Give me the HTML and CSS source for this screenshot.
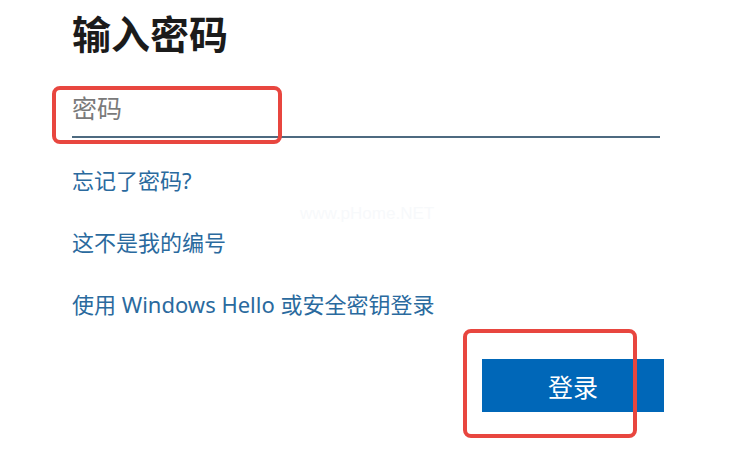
FILE: index.html
```html
<!DOCTYPE html>
<html lang="zh-CN">
<head>
<meta charset="utf-8">
<title>输入密码</title>
<link rel="stylesheet" href="styles.css">
</head>
<body>
<div class="page">
  <h1 class="title">输入密码</h1>
  <div class="field">
    <span class="placeholder">密码</span>
    <div class="mark mark-field"></div>
  </div>
  <div class="links">
    <a class="link" href="#">忘记了密码?</a>
    <a class="link" href="#">这不是我的编号</a>
    <a class="link" href="#">使用 Windows Hello 或安全密钥登录</a>
  </div>
  <div class="watermark">www.pHome.NET</div>
  <div class="actions">
    <div class="btn-wrap">
      <button class="btn">登录</button>
      <div class="mark mark-btn"></div>
    </div>
  </div>
</div>
</body>
</html>
```
FILE: styles.css
```css
html, body {
  margin: 0;
  padding: 0;
  background: #ffffff;
}
body {
  width: 750px;
  height: 460px;
  overflow: hidden;
  font-family: "Noto Sans CJK SC", "Noto Sans", sans-serif;
}
.page {
  position: relative;
  padding: 9px 0 0 72px;
  width: 592px;
  display: flex;
  flex-direction: column;
}
.title {
  margin: 0;
  font-size: 39px;
  line-height: 46px;
  font-weight: 700;
  color: #1b1b1b;
}
.field {
  position: relative;
  margin-top: 37px;
  width: 588px;
  height: 44px;
  border-bottom: 2px solid #4d6a80;
}
.placeholder {
  display: block;
  font-size: 25px;
  line-height: 30px;
  color: #7a7a7a;
}
.mark {
  position: absolute;
  border: 4px solid #e8463f;
  border-radius: 8px;
  box-sizing: border-box;
}
.mark-field {
  left: -20px;
  top: -6px;
  width: 230px;
  height: 58px;
}
.links {
  display: flex;
  flex-direction: column;
  align-items: flex-start;
  gap: 32px;
  margin-top: 27px;
}
.link {
  font-family: "Noto Sans", "Noto Sans CJK SC", sans-serif;
  font-size: 22px;
  line-height: 30px;
  color: #2a6a9e;
  text-decoration: none;
}
.watermark {
  position: absolute;
  left: 300px;
  top: 204px;
  font-family: "Liberation Sans", sans-serif;
  font-size: 17px;
  color: #f7f9fb;
}
.actions {
  display: flex;
  justify-content: flex-end;
  margin-top: 40px;
}
.btn-wrap {
  position: relative;
}
.btn {
  display: block;
  width: 182px;
  height: 53px;
  border: none;
  background: #0067b8;
  color: #ffffff;
  font-family: "Noto Sans CJK SC", "Noto Sans", sans-serif;
  font-size: 25px;
  padding: 0;
}
.mark-btn {
  left: -19px;
  top: -30px;
  width: 174px;
  height: 109px;
}
```
